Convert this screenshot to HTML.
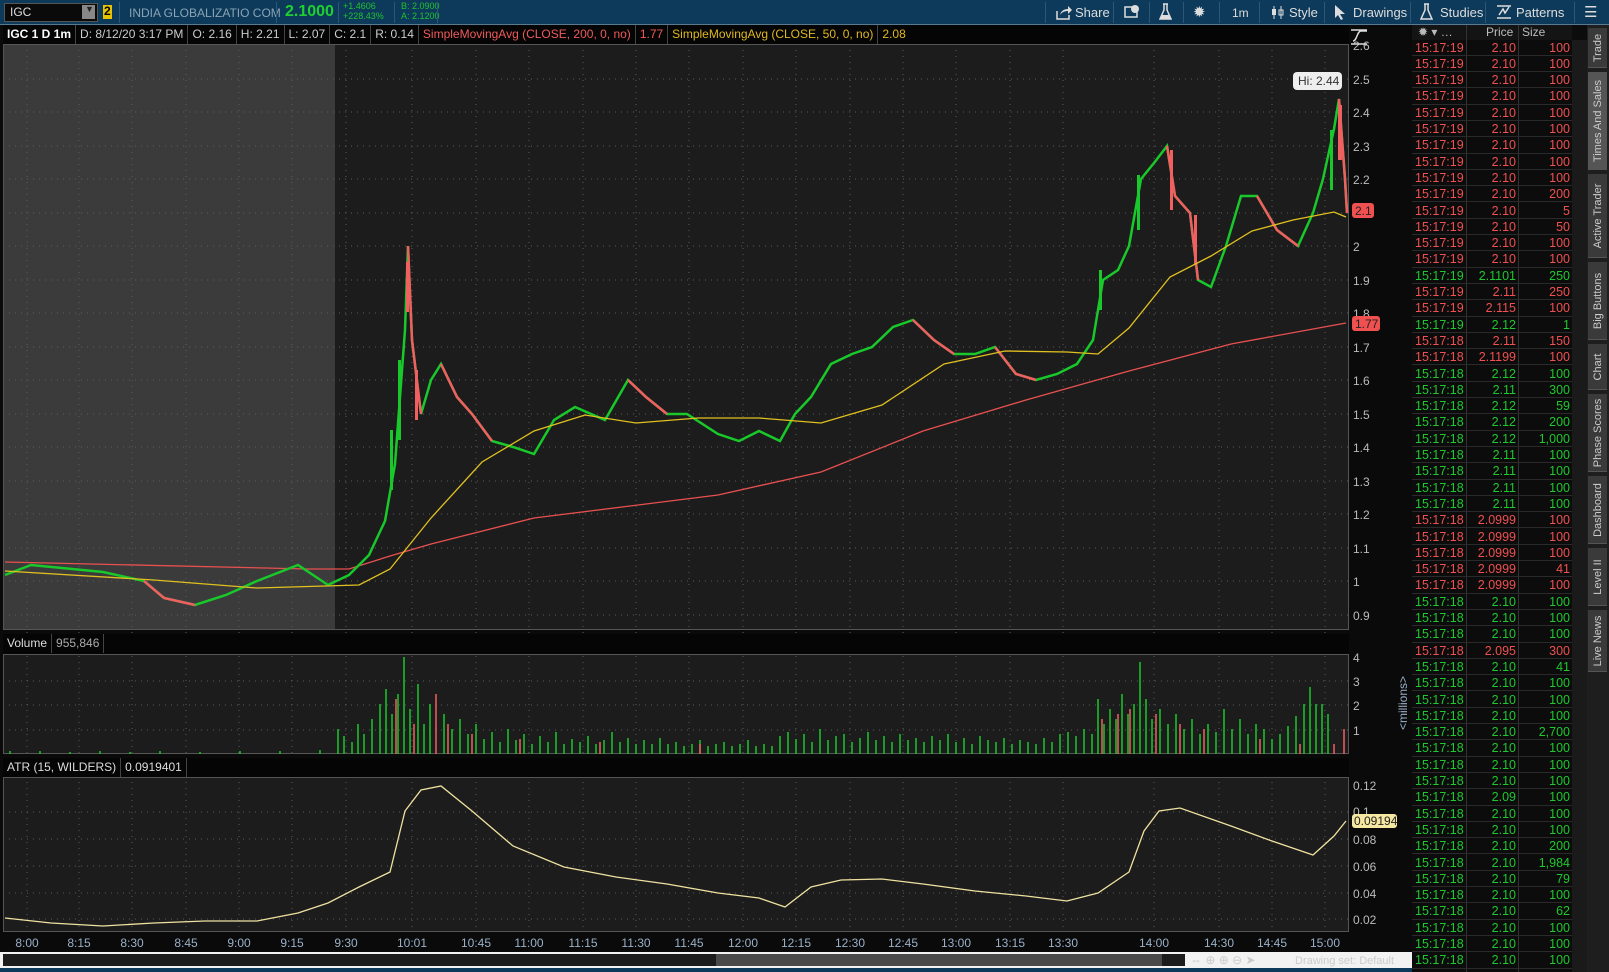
<!DOCTYPE html>
<html><head><meta charset="utf-8">
<style>
*{margin:0;padding:0;box-sizing:border-box}
body{width:1609px;height:972px;background:#0c0c0c;font-family:"Liberation Sans",sans-serif;overflow:hidden;position:relative;color:#ccc}
.abs{position:absolute}
#top{left:0;top:0;width:1609px;height:25px;background:#0d3a5a;border-bottom:1px solid #5a7a90}
.t{position:absolute;white-space:nowrap}
.sep{position:absolute;top:2px;width:1px;height:21px;background:#2d5775}
.hdr{position:absolute;top:25px;height:19px;background:#050505;font-size:12px;line-height:19px;white-space:nowrap}
.hdr span{display:inline-block;padding:0 4px;border-right:1px solid #444;color:#ccc}
#ts{left:1412px;top:25px;width:175px;height:947px;background:#0c0c0c}
.row{position:absolute;left:0;width:160px;height:16.3px;font-size:12.5px;line-height:16px;border-bottom:1px solid #2a2a2a}
.row b{font-weight:normal;position:absolute}
.tab{position:absolute;left:1588px;width:19px;background:#3a3a3a;border-bottom:1px solid #555;color:#ccc;font-size:11px}
.tab div{position:absolute;left:50%;top:50%;transform:translate(-50%,-50%) rotate(-90deg);white-space:nowrap}
</style></head><body>

<div id="top" class="abs">
 <div class="abs" style="left:4px;top:3px;width:94px;height:19px;background:#0a0a0a;border:1px solid #555"></div>
 <div class="t" style="left:10px;top:5px;font-size:12px;color:#ddd">IGC</div>
 <div class="abs" style="left:82px;top:5px;width:13px;height:14px;background:#888"></div>
 <div class="t" style="left:85px;top:4px;font-size:9px;color:#222">▼</div>
 <div class="abs" style="left:103px;top:5px;width:9px;height:14px;background:#e6c200"></div>
 <div class="t" style="left:104px;top:4px;font-size:12px;color:#000;font-weight:bold">2</div>
 <div class="sep" style="left:119px"></div>
 <div class="t" style="left:129px;top:6px;font-size:12px;color:#8aa3b5">INDIA GLOBALIZATIO COM</div>
 <div class="sep" style="left:276px"></div>
 <div class="t" style="left:285px;top:3px;font-size:16px;color:#1fd030;font-weight:bold">2.1000</div>
 <div class="sep" style="left:338px"></div>
 <div class="t" style="left:343px;top:1px;font-size:9px;color:#20c030;line-height:10px">+1.4606<br>+228.43%</div>
 <div class="sep" style="left:394px"></div>
 <div class="t" style="left:401px;top:1px;font-size:9px;color:#20c030;line-height:10px">B: 2.0900<br>A: 2.1200</div>
 <div class="sep" style="left:437px"></div>

 <div class="sep" style="left:1045px"></div>
 <svg class="abs" style="left:1055px;top:5px" width="18" height="15"><path d="M2 6v8h12v-4" stroke="#ddd" fill="none" stroke-width="1.5"/><path d="M5 10c1-4 4-6 8-6V1l4 4-4 4V6c-3 0-6 1-8 4z" fill="#ddd"/></svg>
 <div class="t" style="left:1075px;top:5px;font-size:13px;color:#ddd">Share</div>
 <div class="sep" style="left:1113px"></div>
 <svg class="abs" style="left:1124px;top:5px" width="16" height="14"><rect x="1" y="2" width="12" height="10" fill="none" stroke="#ddd" stroke-width="1.5"/><circle cx="11" cy="4" r="4" fill="#ddd"/></svg>
 <div class="sep" style="left:1149px"></div>
 <svg class="abs" style="left:1159px;top:3px" width="13" height="18"><path d="M4 1h5M5 1v6L1 16h11L8 7V1" stroke="#ddd" fill="none" stroke-width="1.5"/><path d="M3 12h7l2 4H1z" fill="#ddd"/></svg>
 <div class="sep" style="left:1183px"></div>
 <div class="t" style="left:1193px;top:3px;font-size:15px;color:#ddd">✹</div>
 <div class="sep" style="left:1219px"></div>
 <div class="t" style="left:1232px;top:6px;font-size:12px;color:#ddd">1m</div>
 <div class="sep" style="left:1259px"></div>
 <svg class="abs" style="left:1270px;top:5px" width="16" height="15"><path d="M4 1v13M11 1v13" stroke="#ddd"/><rect x="2" y="4" width="4" height="6" fill="#ddd"/><rect x="9" y="5" width="4" height="5" fill="none" stroke="#ddd"/></svg>
 <div class="t" style="left:1289px;top:5px;font-size:13px;color:#ddd">Style</div>
 <div class="sep" style="left:1324px"></div>
 <svg class="abs" style="left:1334px;top:4px" width="12" height="16"><path d="M1 1v13l3-3 3 5 2-1-3-5h5z" fill="#ddd"/></svg>
 <div class="t" style="left:1353px;top:5px;font-size:13px;color:#ddd">Drawings</div>
 <div class="sep" style="left:1410px"></div>
 <svg class="abs" style="left:1420px;top:3px" width="13" height="18"><path d="M4 1h5M5 1v6L1 16h11L8 7V1" stroke="#ddd" fill="none" stroke-width="1.5"/></svg>
 <div class="t" style="left:1440px;top:5px;font-size:13px;color:#ddd">Studies</div>
 <div class="sep" style="left:1485px"></div>
 <svg class="abs" style="left:1496px;top:4px" width="16" height="16"><path d="M1 2h14M1 14h14M3 11l4-6 2 4 4-6" stroke="#ddd" fill="none" stroke-width="1.5"/></svg>
 <div class="t" style="left:1516px;top:5px;font-size:13px;color:#ddd">Patterns</div>
 <div class="sep" style="left:1574px"></div>
 <div class="t" style="left:1584px;top:3px;font-size:15px;color:#ddd">☰</div>
</div>

<svg class="abs" style="left:0;top:25px" width="1412" height="947" viewBox="0 25 1412 947">
 <rect x="0" y="25" width="1412" height="947" fill="#0a0a0a"/>
 <rect x="3" y="44" width="1346" height="586" fill="#1c1c1c"/>
 <rect x="3" y="44" width="332" height="586" fill="#3b3b3b"/>
 <rect x="3" y="654" width="1346" height="100" fill="#1c1c1c"/>
 <rect x="3" y="777" width="1346" height="155" fill="#1c1c1c"/>
 <g stroke="#5c5c5c" stroke-dasharray="1 5" stroke-width="1">
  <path d="M3 79H1349M3 112H1349M3 146H1349M3 179H1349M3 213H1349M3 246H1349M3 280H1349M3 313H1349M3 347H1349M3 380H1349M3 414H1349M3 447H1349M3 481H1349M3 514H1349M3 548H1349M3 581H1349M3 615H1349"/>
  <path d="M3 681H1349M3 705H1349M3 730H1349M3 812H1349M3 839H1349M3 866H1349M3 893H1349M3 919H1349"/>
  <path d="M27 44V932M79 44V932M132 44V932M186 44V932M239 44V932M292 44V932M346 44V932M412 44V932M476 44V932M529 44V932M583 44V932M636 44V932M689 44V932M743 44V932M796 44V932M850 44V932M903 44V932M956 44V932M1010 44V932M1063 44V932M1154 44V932M1219 44V932M1272 44V932M1325 44V932"/>
 </g>
 <g stroke="#555" fill="none"><rect x="3.5" y="44.5" width="1345" height="585"/><rect x="3.5" y="654.5" width="1345" height="99"/><rect x="3.5" y="777.5" width="1345" height="154"/></g>
 <polyline fill="none" stroke="#e85050" stroke-width="1.3" points="5,562 308,569 349,569 390,556 431,544 534,518 718,495 821,472 923,431 1026,400 1129,371 1231,344 1346,323"/>
 <polyline fill="none" stroke="#19c82a" stroke-width="2.5" points="5,575 31,565 62,568 103,572 144,581 164,598 195,605 226,595 257,581 298,565 328,585 349,575 369,555 385,521 395,464 400,397 405,330 408,246 412,340 421,414 431,380 441,364 457,397 472,414 492,441 513,447 534,454 554,420 575,407 605,420 628,380 646,397 667,414 687,414 718,434 739,441 759,431 780,441 795,414 811,397 831,364 852,354 872,347 893,327 913,320 934,340 954,354 975,354 995,347 1016,374 1036,380 1057,374 1077,364 1093,340 1103,280 1118,270 1129,246 1141,179 1154,163 1167,146 1175,196 1190,213 1198,280 1211,287 1226,246 1241,196 1257,196 1277,230 1298,246 1313,213 1323,179 1334,129 1339,99 1345,179 1347,213"/>
 <g stroke="#f06060" stroke-width="2.5" fill="none">
  <polyline points="408,246 412,340 421,414"/><polyline points="441,364 457,397 472,414 492,441"/><polyline points="628,380 646,397 667,414"/><polyline points="913,320 934,340 954,354"/><polyline points="995,347 1016,374 1036,380"/><polyline points="1167,146 1175,196 1190,213 1198,280"/><polyline points="1257,196 1277,230 1298,246"/><polyline points="1339,99 1345,179 1347,213"/><polyline points="144,581 164,598 195,605"/>
 </g>
 <g fill="#f06060"><rect x="406" y="262" width="3" height="50"/><rect x="415" y="370" width="3" height="50"/><rect x="1170" y="150" width="3" height="60"/><rect x="1338" y="105" width="4" height="55"/><rect x="1194" y="215" width="3" height="50"/></g>
 <g fill="#19c82a"><rect x="398" y="360" width="3" height="80"/><rect x="1137" y="175" width="3" height="55"/><rect x="1330" y="130" width="3" height="60"/><rect x="1099" y="270" width="3" height="40"/><rect x="390" y="430" width="3" height="60"/></g>
 <polyline fill="none" stroke="#e0c020" stroke-width="1.3" points="5,571 154,580 257,588 359,585 390,569 431,518 482,462 534,431 585,415 636,423 698,418 759,418 821,423 882,405 944,364 1005,351 1067,352 1098,354 1129,328 1170,277 1211,256 1252,231 1293,220 1334,212 1346,217"/>
 <g stroke="#19c82a" stroke-width="1.5">
  <path d="M10 754v-3M40 754v-3M70 754v-2M100 754v-3M130 754v-2M160 754v-3M200 754v-2M240 754v-3M280 754v-3M320 754v-4"/>
  <path d="M338 754v-25M344 754v-18M352 754v-12M358 754v-30M364 754v-20M372 754v-35M380 754v-50M386 754v-65M392 754v-40M398 754v-60M404 754v-97M410 754v-45M418 754v-70M424 754v-30M430 754v-50M444 754v-40M452 754v-25M460 754v-35M468 754v-20M476 754v-30M484 754v-15M492 754v-22M500 754v-12M508 754v-25M516 754v-14M524 754v-20M532 754v-10M540 754v-18M548 754v-12M556 754v-22M564 754v-10M572 754v-15M580 754v-12M588 754v-18M596 754v-10M604 754v-14M612 754v-22M620 754v-12M628 754v-16M636 754v-10M644 754v-14M652 754v-10M660 754v-16M668 754v-10M676 754v-12M684 754v-8M692 754v-10M700 754v-14M708 754v-8M716 754v-10M724 754v-12M732 754v-8M740 754v-10M748 754v-14M756 754v-8M764 754v-10M772 754v-8M780 754v-18M788 754v-22M796 754v-15M804 754v-20M812 754v-12M820 754v-25M828 754v-14M836 754v-18M844 754v-20M852 754v-12M860 754v-16M868 754v-22M876 754v-14M884 754v-18M892 754v-12M900 754v-20M908 754v-14M916 754v-16M924 754v-12M932 754v-18M940 754v-14M948 754v-20M956 754v-12M964 754v-16M972 754v-10M980 754v-18M988 754v-14M996 754v-12M1004 754v-16M1012 754v-10M1020 754v-14M1028 754v-12M1036 754v-10M1044 754v-16M1052 754v-12M1060 754v-20M1068 754v-22M1076 754v-18M1084 754v-25M1092 754v-20M1098 754v-55M1104 754v-30M1110 754v-45M1116 754v-35M1122 754v-60M1128 754v-40M1134 754v-50M1140 754v-92M1146 754v-55M1152 754v-35M1160 754v-45M1168 754v-30M1176 754v-40M1184 754v-25M1192 754v-35M1200 754v-20M1208 754v-30M1216 754v-22M1224 754v-45M1232 754v-25M1240 754v-35M1248 754v-20M1256 754v-30M1264 754v-25M1272 754v-15M1280 754v-20M1288 754v-28M1296 754v-38M1304 754v-50M1310 754v-67M1316 754v-50M1322 754v-50M1328 754v-40"/>
 </g>
 <g stroke="#f06060" stroke-width="1.5"><path d="M396 754v-55M414 754v-30M436 754v-60M448 754v-30M472 754v-20M520 754v-15M600 754v-12M700 754v-10M1102 754v-35M1118 754v-40M1130 754v-45M1156 754v-40M1180 754v-30M1204 754v-25M1260 754v-15M1300 754v-10M1334 754v-10M1344 754v-25"/></g>
 <polyline fill="none" stroke="#efe2a0" stroke-width="1.3" points="5,918 51,923 103,926 154,923 205,921 257,921 298,913 328,903 359,887 390,872 405,811 421,790 441,786 472,811 513,846 564,867 616,877 667,884 718,893 759,898 785,907 811,887 841,880 882,879 923,884 975,891 1026,896 1067,901 1098,893 1129,872 1144,831 1159,811 1180,808 1231,826 1272,841 1313,855 1334,836 1346,821"/>
 <g font-family="Liberation Sans" font-size="12" fill="#bbb">
  <text x="1353" y="50">2.6</text><text x="1353" y="84">2.5</text><text x="1353" y="117">2.4</text><text x="1353" y="151">2.3</text><text x="1353" y="184">2.2</text><text x="1353" y="251">2</text><text x="1353" y="285">1.9</text><text x="1353" y="318">1.8</text><text x="1353" y="352">1.7</text><text x="1353" y="385">1.6</text><text x="1353" y="419">1.5</text><text x="1353" y="452">1.4</text><text x="1353" y="486">1.3</text><text x="1353" y="519">1.2</text><text x="1353" y="553">1.1</text><text x="1353" y="586">1</text><text x="1353" y="620">0.9</text>
  <text x="1353" y="662">4</text><text x="1353" y="686">3</text><text x="1353" y="710">2</text><text x="1353" y="735">1</text>
  <text x="1353" y="790">0.12</text><text x="1353" y="816">0.1</text><text x="1353" y="844">0.08</text><text x="1353" y="871">0.06</text><text x="1353" y="898">0.04</text><text x="1353" y="924">0.02</text>
  <g fill="#9ab0c8" text-anchor="middle"><text x="27" y="947">8:00</text><text x="79" y="947">8:15</text><text x="132" y="947">8:30</text><text x="186" y="947">8:45</text><text x="239" y="947">9:00</text><text x="292" y="947">9:15</text><text x="346" y="947">9:30</text><text x="412" y="947">10:01</text><text x="476" y="947">10:45</text><text x="529" y="947">11:00</text><text x="583" y="947">11:15</text><text x="636" y="947">11:30</text><text x="689" y="947">11:45</text><text x="743" y="947">12:00</text><text x="796" y="947">12:15</text><text x="850" y="947">12:30</text><text x="903" y="947">12:45</text><text x="956" y="947">13:00</text><text x="1010" y="947">13:15</text><text x="1063" y="947">13:30</text><text x="1154" y="947">14:00</text><text x="1219" y="947">14:30</text><text x="1272" y="947">14:45</text><text x="1325" y="947">15:00</text></g>
  <text transform="translate(1407,730) rotate(-90)" fill="#9ab0c8">&lt;millions&gt;</text>
 </g>
 <path d="M1351 30h16M1351 44h16M1353 41c4 0 4-10 8-10s4 0 6 0" stroke="#ddd" fill="none" stroke-width="1.5"/>
 <rect x="1293" y="72" width="49" height="18" rx="4" fill="#eee"/><text x="1298" y="85" font-family="Liberation Sans" font-size="12" fill="#333">Hi: 2.44</text>
 <rect x="1352" y="203" width="22" height="15" rx="3" fill="#f05050"/><text x="1355" y="215" font-family="Liberation Sans" font-size="12" fill="#222">2.1</text>
 <rect x="1352" y="316" width="28" height="15" rx="3" fill="#f05050"/><text x="1355" y="328" font-family="Liberation Sans" font-size="12" fill="#222">1.77</text>
 <rect x="1352" y="814" width="45" height="14" rx="3" fill="#f6e8a0"/><text x="1354" y="825" font-family="Liberation Sans" font-size="12" fill="#222">0.09194</text>
 <rect x="0" y="952" width="1412" height="16" fill="#f2f2f2"/>
 <rect x="3" y="954" width="1182" height="12" fill="#1c1c1c"/>
 <rect x="716" y="954" width="446" height="12" fill="#4a4a4a"/>
 <text x="1295" y="964" font-family="Liberation Sans" font-size="11" fill="#ccc">Drawing set: Default</text>
 <text x="1190" y="964" font-family="Liberation Sans" font-size="12" fill="#ccc">⇔ ⊕ ⊕ ⊖ ➤</text>
 <rect x="0" y="968" width="1412" height="4" fill="#0d3a5a"/>
</svg>

<div class="hdr" style="left:3px;width:1346px"><span style="color:#fff;font-weight:bold;padding-left:4px">IGC 1 D 1m</span><span>D: 8/12/20 3:17 PM</span><span>O: 2.16</span><span>H: 2.21</span><span>L: 2.07</span><span>C: 2.1</span><span>R: 0.14</span><span style="color:#f05a5a">SimpleMovingAvg (CLOSE, 200, 0, no)</span><span style="color:#f05a5a">1.77</span><span style="color:#e0b820">SimpleMovingAvg (CLOSE, 50, 0, no)</span><span style="color:#e0b820;border:0">2.08</span></div>
<div class="hdr" style="left:3px;top:634px;width:1346px;height:20px"><span style="color:#ddd">Volume</span><span style="color:#aaa">955,846</span></div>
<div class="hdr" style="left:3px;top:758px;width:1346px"><span style="color:#ddd">ATR (15, WILDERS)</span><span style="color:#ddd">0.0919401</span></div>

<div id="ts" class="abs">
 <div class="abs" style="left:0;top:0;width:160px;height:15px;background:#141414;font-size:12px;color:#bbb;line-height:15px">
  <span class="t" style="left:6px">✹ ▾ …</span><span class="t" style="left:74px">Price</span><span class="t" style="left:110px">Size</span>
 </div>
 <div class="abs" style="left:54px;top:0;width:1px;height:947px;background:#333"></div>
 <div class="abs" style="left:106px;top:0;width:1px;height:947px;background:#333"></div>
 <div class="abs" style="left:160px;top:15px;width:15px;height:932px;background:#1a1a1a"></div>
 <div id="rows"></div>
</div>
<script>
var d=[["19","2.10","100","r"],["19","2.10","100","r"],["19","2.10","100","r"],["19","2.10","100","r"],["19","2.10","100","r"],["19","2.10","100","r"],["19","2.10","100","r"],["19","2.10","100","r"],["19","2.10","100","r"],["19","2.10","200","r"],["19","2.10","5","r"],["19","2.10","50","r"],["19","2.10","100","r"],["19","2.10","100","r"],["19","2.1101","250","g"],["19","2.11","250","r"],["19","2.115","100","r"],["19","2.12","1","g"],["18","2.11","150","r"],["18","2.1199","100","r"],["18","2.12","100","g"],["18","2.11","300","g"],["18","2.12","59","g"],["18","2.12","200","g"],["18","2.12","1,000","g"],["18","2.11","100","g"],["18","2.11","100","g"],["18","2.11","100","g"],["18","2.11","100","g"],["18","2.0999","100","r"],["18","2.0999","100","r"],["18","2.0999","100","r"],["18","2.0999","41","r"],["18","2.0999","100","r"],["18","2.10","100","g"],["18","2.10","100","g"],["18","2.10","100","g"],["18","2.095","300","r"],["18","2.10","41","g"],["18","2.10","100","g"],["18","2.10","100","g"],["18","2.10","100","g"],["18","2.10","2,700","g"],["18","2.10","100","g"],["18","2.10","100","g"],["18","2.10","100","g"],["18","2.09","100","g"],["18","2.10","100","g"],["18","2.10","100","g"],["18","2.10","200","g"],["18","2.10","1,984","g"],["18","2.10","79","g"],["18","2.10","100","g"],["18","2.10","62","g"],["18","2.10","100","g"],["18","2.10","100","g"],["18","2.10","100","g"]];
var h="";for(var i=0;i<d.length;i++){var c=d[i][3]=="r"?"#f05050":"#1fc82e";h+='<div class="row" style="top:'+(14.5+i*16.3)+'px;color:'+c+'"><b style="left:3px">15:17:'+d[i][0]+'</b><b style="right:56px">'+d[i][1]+'</b><b style="right:2px">'+d[i][2]+'</b></div>';}
document.getElementById("rows").innerHTML=h;
</script>

<div class="abs" style="left:1587px;top:25px;width:22px;height:947px;background:#1e1e1e"></div>
<div class="tab" style="top:28px;height:40px"><div>Trade</div></div>
<div class="tab" style="top:72px;height:98px;background:#555"><div>Times And Sales</div></div>
<div class="tab" style="top:174px;height:84px"><div>Active Trader</div></div>
<div class="tab" style="top:262px;height:78px"><div>Big Buttons</div></div>
<div class="tab" style="top:344px;height:46px"><div>Chart</div></div>
<div class="tab" style="top:394px;height:78px"><div>Phase Scores</div></div>
<div class="tab" style="top:476px;height:68px"><div>Dashboard</div></div>
<div class="tab" style="top:548px;height:58px"><div>Level II</div></div>
<div class="tab" style="top:610px;height:62px"><div>Live News</div></div>
</body></html>
